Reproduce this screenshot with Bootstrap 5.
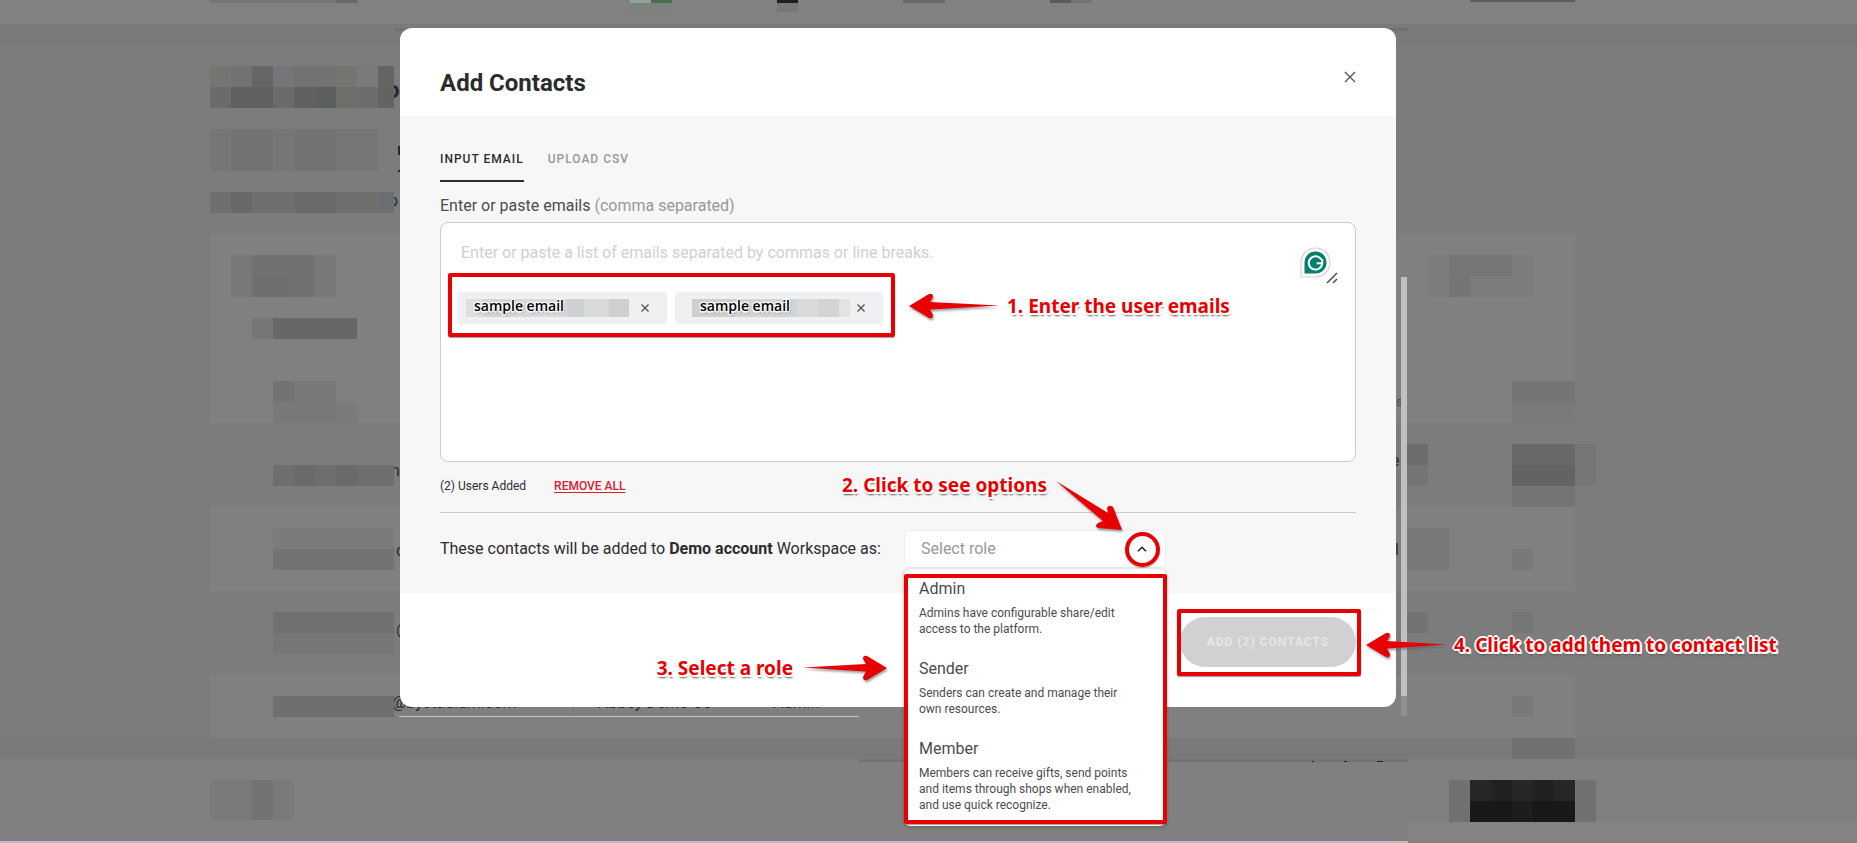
<!DOCTYPE html>
<html lang="en">
<head>
<meta charset="utf-8">
<meta name="viewport" content="width=device-width, initial-scale=1">
<title>Add Contacts</title>
<link href="https://cdn.jsdelivr.net/npm/bootstrap@5.3.0/dist/css/bootstrap.min.css" rel="stylesheet">
<style>
  :root { --mark: #e80000; --ink: #2b2c2e; }
  body { font-family: Roboto, "Noto Sans", sans-serif; font-size: 16px; line-height: 20px; color: var(--ink); background: #7b7b7b; }
  .stage { min-height: 100vh; overflow: hidden; display: grid; grid-template-columns: 400fr 996fr 461fr; align-items: start; }
  .backdrop-art { top: 0; left: 0; width: 100%; height: 100%; }
  .dialog-panel { grid-column: 2; margin-top: 28px; background: #fff; border-radius: 12px; }
  .dialog-head { padding: 39px 40px 17px; }
  .dialog-head h1 { font-size: 24px; line-height: 32px; }
  .icon-btn { border: 0; background: none; padding: 0; line-height: 0; }
  .dialog-main { background: #f7f7f8; padding: 33px 40px 25px; }
  .tab-link { font-size: 12px; font-weight: 500; letter-spacing: 1px; color: #97989a; padding: 0 0 11px; border: 0; border-bottom: 2px solid transparent; background: none; }
  .tab-link.active { color: var(--ink); border-color: var(--ink); }
  .field-label { margin: 14px 0 6px; color: #4b4c4e; }
  .muted { color: #97989a; }
  .email-box { height: 240px; border: 1px solid #cacbcc; border-radius: 8px; background: #fff; }
  .email-input { display: block; width: 100%; height: 69px; border: 0; resize: none; overflow: hidden; background: none; padding: 20px 20px; line-height: 20px; outline: 0; }
  .email-input::placeholder { color: #cfd0d2; opacity: 1; }
  .grammar { right: 24px; top: 24px; }
  .grip { right: 17px; top: 49px; }
  .chips { padding-left: 16px; gap: 8px; width: max-content; }
  .chip { height: 32px; width: 210px; border-radius: 4px; background: #eff0f2; padding: 0 18px 0 9px; }
  .chip-short { width: 208px; padding-left: 17px; }
  .chip-name { width: 163px; height: 18px; padding-left: 8px; font: 600 14px/14px "Open Sans", sans-serif; color: #000;
    background: linear-gradient(90deg, #dedfe1 0 17px, #d3d4d6 17px 51px, #d8d9db 51px 101px, #d0d0d2 101px 118px, #d8d9da 118px 143px, #cfcfd1 143px);
    text-shadow: -1px -1px 1px #fff, 1px -1px 1px #fff, -1px 1px 1px #fff, 1px 1px 1px #fff, 0 2px 1px #fff, 1px 2px 2px #777; }
  .chip-short .chip-name { width: 158px; background: linear-gradient(90deg, #cdced0 0 42px, #d2d3d5 42px 105px, #d9dadc 105px 126px, #d3d4d6 126px 147px, #e2e3e5 147px); }
  .status { font-size: 12px; margin-top: 14px; gap: 28px; }
  .remove-link { color: #d8202f; font-weight: 500; text-underline-offset: 2px; }
  .rule { border-top: 1px solid #cacbcc; margin: 16px 0 17px; }
  .role-row { gap: 8px; }
  .role-text { min-width: 456px; }
  .role-wrap { width: 262px; }
  .role-select { width: 100%; height: 38px; border: 1px solid #eeeeef; border-radius: 7px; background: #fff; padding: 0 16px; color: #97989a; appearance: none; }
  .chevron { right: 19px; top: 16px; pointer-events: none; }
  .role-menu { left: 0; top: 39px; width: 100%; height: 257px; background: #fff; border-radius: 6px; padding: 10px 0 0; box-shadow: 0 1px 4px rgba(0,0,0,.25); z-index: 2; }
  .role-item { display: block; width: 100%; border: 0; background: none; text-align: left; padding: 0 12px 0 15px; margin-bottom: 22px; color: #4b4c4e; }
  .role-item small { display: block; font-size: 12px; line-height: 16px; margin-top: 6px; }
  .dialog-foot { padding: 24px 40px 40px; }
  .add-btn { width: 176px; height: 50px; border: 0; border-radius: 25px; background: #d1d1d3; color: #e6e6e8; font-size: 12px; font-weight: 700; letter-spacing: 1px; white-space: nowrap; }

  /* red call-outs laid over the dialog */
  .ring { border: 4px solid var(--mark); border-radius: 2px; box-shadow: 0 1px 1px rgba(90,90,90,.6); pointer-events: none; z-index: 3; }
  .ring-chips { left: 7px; top: 50px; width: 447px; height: 64px; }
  .ring-menu { left: 0; top: 5px; width: 263px; height: 250px; }
  .ring-chevron { right: 6px; top: 2px; width: 35px; height: 35px; border-radius: 50%; }
  .ring-add { left: -3px; top: -8px; width: 184px; height: 67px; }
  .note { display: flex; align-items: center; gap: 8px; white-space: nowrap; z-index: 3; }
  .note span { font: bold 19px/24px "Noto Sans", sans-serif; color: var(--mark);
    text-shadow: -2px 0 0 #fff, 2px 0 0 #fff, 0 -2px 0 #fff, 0 2px 0 #fff, -1px -1px 0 #fff, 1px -1px 0 #fff, -1px 1px 0 #fff, 1px 1px 0 #fff, 2px 2px 0 #fff, 1px 3px 2px #555; }
  .note svg { filter: drop-shadow(1px 2px 1px rgba(90,90,90,.6)); flex: none; }
  .note-1 { left: 468px; top: 70px; }
  .note-2 { right: 44px; top: -57px; align-items: flex-start; gap: 9px; }
  .note-3 { right: 509px; top: 62px; gap: 10px; }
  .note-4 { left: 186px; top: 15px; }
</style>
</head>
<body>
<div class="stage position-relative">
  <svg class="backdrop-art position-absolute" viewBox="0 0 1857 843" preserveAspectRatio="none" aria-hidden="true" shape-rendering="crispEdges">
    <defs><clipPath id="pageEdge"><rect x="394" y="0" width="1007" height="843"/></clipPath></defs>
    <rect width="1857" height="843" fill="#7c7c7c"/>
    <rect width="1857" height="24" fill="#818181"/>
    <rect y="24" width="1857" height="21" fill="#7a7a7a"/>
    <g fill="#808080">
      <rect x="210" y="234" width="190" height="189"/><rect x="210" y="506" width="190" height="85"/><rect x="210" y="675" width="190" height="63"/>
      <rect x="1396" y="234" width="179" height="189"/><rect x="1396" y="507" width="179" height="84"/><rect x="1396" y="675" width="179" height="63"/>
      <rect x="394" y="700" width="1014" height="38"/><rect y="759" width="1857" height="84"/>
    </g>
    <rect y="738" width="1857" height="21" fill="#7a7a7a"/>
    <rect x="858" y="759" width="550" height="3" fill="#747474"/>
    <rect x="394" y="28" width="1014" height="3" fill="#707070"/>
    <rect x="1408" y="822" width="449" height="21" fill="#838383"/>
    <!-- header strip -->
    <rect x="210" width="148" height="3" fill="#757575"/><rect x="336" width="21" height="3" fill="#696969"/>
    <rect x="630" width="21" height="3" fill="#8fa396"/><rect x="651" width="21" height="3" fill="#47704f"/><rect x="630" y="3" width="42" height="9" fill="#7d817d"/>
    <rect x="777" width="21" height="3" fill="#1e1e1e"/><rect x="777" y="3" width="21" height="9" fill="#777"/>
    <rect x="903" width="42" height="3" fill="#686868"/><rect x="1050" width="21" height="3" fill="#5a5a5a"/><rect x="1071" width="21" height="3" fill="#747474"/>
    <rect x="1470" width="105" height="2" fill="#5c5c5c"/>
    <!-- left mosaic -->
    <rect x="210" y="66" width="21" height="21" fill="#757572"/><rect x="231" y="66" width="21" height="21" fill="#707372"/><rect x="252" y="66" width="21" height="21" fill="#666"/><rect x="273" y="66" width="21" height="21" fill="#75767a"/><rect x="294" y="66" width="42" height="21" fill="#727272"/><rect x="336" y="66" width="21" height="21" fill="#757471"/><rect x="357" y="66" width="21" height="21" fill="#7a7a7b"/><rect x="378" y="66" width="16" height="21" fill="#646464"/>
    <rect x="210" y="87" width="21" height="21" fill="#6b6b6b"/><rect x="231" y="87" width="42" height="21" fill="#606060"/><rect x="273" y="87" width="21" height="21" fill="#6b6b6b"/><rect x="294" y="87" width="21" height="21" fill="#616161"/><rect x="315" y="87" width="21" height="21" fill="#5c605f"/><rect x="336" y="87" width="21" height="21" fill="#6f6e6a"/><rect x="357" y="87" width="21" height="21" fill="#6c6d70"/><rect x="378" y="87" width="16" height="21" fill="#636363"/>
    <rect x="210" y="129" width="168" height="42" fill="#767676"/><rect x="231" y="129" width="42" height="42" fill="#737373"/><rect x="294" y="129" width="42" height="42" fill="#727473"/>
    <rect x="210" y="192" width="184" height="21" fill="#6f6f6f"/><rect x="231" y="192" width="21" height="21" fill="#686868"/><rect x="294" y="192" width="42" height="21" fill="#6b6b6b"/><rect x="378" y="192" width="16" height="21" fill="#6b6e72"/>
    <rect x="231" y="255" width="105" height="42" fill="#787878"/><rect x="252" y="255" width="63" height="42" fill="#717171"/><rect x="252" y="276" width="42" height="21" fill="#6f6f6f"/>
    <rect x="252" y="318" width="21" height="21" fill="#767676"/><rect x="273" y="318" width="84" height="21" fill="#676767"/>
    <rect x="273" y="381" width="63" height="42" fill="#797979"/><rect x="273" y="381" width="21" height="21" fill="#737373"/><rect x="336" y="402" width="21" height="21" fill="#797c7b"/>
    <rect x="273" y="465" width="121" height="21" fill="#6e6e6e"/><rect x="294" y="465" width="21" height="21" fill="#6a6a6a"/><rect x="336" y="465" width="21" height="21" fill="#6a6a6a"/>
    <rect x="273" y="528" width="121" height="21" fill="#7b7b7b"/><rect x="273" y="549" width="121" height="21" fill="#737373"/>
    <rect x="273" y="612" width="121" height="21" fill="#6f7070"/><rect x="273" y="633" width="121" height="21" fill="#767676"/>
    <rect x="273" y="696" width="121" height="21" fill="#6e6f6f"/>
    <rect x="210" y="780" width="84" height="40" fill="#7a7a7a"/><rect x="252" y="780" width="21" height="40" fill="#737373"/>
    <!-- right mosaic -->
    <rect x="1428" y="255" width="105" height="42" fill="#7c7c7c"/><rect x="1449" y="255" width="63" height="21" fill="#767676"/><rect x="1449" y="276" width="21" height="21" fill="#757575"/>
    <rect x="1512" y="381" width="63" height="21" fill="#747574"/><rect x="1512" y="402" width="63" height="21" fill="#7a7a7a"/>
    <rect x="1407" y="444" width="21" height="21" fill="#6c6c6c"/><rect x="1407" y="465" width="21" height="21" fill="#757575"/>
    <rect x="1512" y="444" width="63" height="21" fill="#686a6a"/><rect x="1512" y="465" width="63" height="21" fill="#626365"/><rect x="1512" y="486" width="63" height="21" fill="#747474"/><rect x="1575" y="444" width="21" height="42" fill="#767676"/>
    <rect x="1407" y="528" width="42" height="42" fill="#797979"/><rect x="1512" y="549" width="21" height="21" fill="#797979"/>
    <rect x="1407" y="612" width="21" height="21" fill="#737373"/><rect x="1512" y="612" width="21" height="21" fill="#767676"/><rect x="1512" y="696" width="21" height="21" fill="#797979"/>
    <rect x="1512" y="738" width="63" height="21" fill="#717171"/>
    <rect x="1449" y="780" width="147" height="42" fill="#717171"/>
    <rect x="1470" y="780" width="105" height="21" fill="#262626"/><rect x="1491" y="780" width="21" height="21" fill="#212121"/><rect x="1533" y="780" width="21" height="21" fill="#212121"/>
    <rect x="1470" y="801" width="105" height="21" fill="#181818"/><rect x="1512" y="801" width="21" height="21" fill="#1d1d1d"/>
    <!-- page edges showing round the dialog -->
    <rect x="1401" y="277" width="6" height="419" fill="#c0c0c0"/><rect x="1401" y="696" width="6" height="20" fill="#919191"/>
    <rect x="399" y="716" width="460" height="1" fill="#c4c4c4"/><rect x="573" y="707" width="1" height="9" fill="#727272"/>
    <rect y="841" width="1408" height="2" fill="#bdb8c6"/>
    <g fill="#262a30" font-family="Roboto, sans-serif" font-size="16" clip-path="url(#pageEdge)">
      <text x="386" y="98" font-size="24" font-weight="700">o</text><text x="389" y="206">p</text>
      <text x="391" y="476">n</text><text x="396" y="556">o</text><text x="396" y="635">@</text>
      <text x="392" y="708">@bystadium.com</text><text x="598" y="708">Abbey Demo Co</text><text x="773" y="708">Admin</text>
      <text x="1396" y="406" font-size="13" fill="#4a4a4a">s</text><text x="1391" y="466">e</text><text x="1395" y="555">l</text>
    </g>
    <rect x="398" y="146" width="2" height="9" fill="#262a30"/><rect x="398" y="170" width="2" height="2" fill="#262a30"/>
    <rect x="1312" y="761" width="2" height="1" fill="#222"/><rect x="1344" y="761" width="3" height="1" fill="#222"/><rect x="1377" y="761" width="6" height="1" fill="#222"/>
  </svg>

  <main class="dialog-panel position-relative" role="dialog" aria-labelledby="dlgTitle">
    <header class="dialog-head d-flex justify-content-between align-items-start">
      <h1 id="dlgTitle" class="fw-bold mb-0">Add Contacts</h1>
      <button class="icon-btn mt-1" type="button" aria-label="Close">
        <svg width="12" height="12" viewBox="0 0 12 12" fill="none" stroke="#4b4c4e" stroke-width="1.2"><path d="M1 1l10 10M11 1L1 11"/></svg>
      </button>
    </header>

    <section class="dialog-main">
      <div class="d-flex gap-4" role="tablist">
        <button class="tab-link active" role="tab" aria-selected="true" type="button">INPUT EMAIL</button>
        <button class="tab-link" role="tab" aria-selected="false" type="button">UPLOAD CSV</button>
      </div>

      <label class="field-label d-block" for="emails">Enter or paste emails <span class="muted">(comma separated)</span></label>
      <div class="email-box position-relative">
        <textarea id="emails" class="email-input" placeholder="Enter or paste a list of emails separated by commas or line breaks."></textarea>
        <svg class="grammar position-absolute" width="31" height="31" viewBox="0 0 31 31">
          <path d="M1 30V15.500A14.500 14.500 0 1 1 15.500 30Z" fill="#fff" stroke="#d3d1e0" stroke-width="1.200"/>
          <path d="M4.500 26.500V15.500A11 11 0 1 1 15.500 26.500Z" fill="#027e6f"/>
          <path d="M21.300 12.500A6.700 6.700 0 1 0 22.200 16.200H16.600M22.300 12V16.200" fill="none" stroke="#fff" stroke-width="2"/>
        </svg>
        <svg class="grip position-absolute" width="12" height="12" viewBox="0 0 12 12" stroke="#4b4c4e" stroke-width="1.500"><path d="M1 11L11 1M7 11l4-4"/></svg>

        <div class="chips d-flex">
          <div class="chip d-flex align-items-center justify-content-between">
            <span class="chip-name">sample email</span>
            <button class="icon-btn" type="button" aria-label="Remove first email"><svg width="8" height="8" viewBox="0 0 8 8" stroke="#4b4c4e" stroke-width="1.200"><path d="M.5 .5l7 7M7.500 .5l-7 7"/></svg></button>
          </div>
          <div class="chip chip-short d-flex align-items-center justify-content-between">
            <span class="chip-name">sample email</span>
            <button class="icon-btn" type="button" aria-label="Remove second email"><svg width="8" height="8" viewBox="0 0 8 8" stroke="#4b4c4e" stroke-width="1.200"><path d="M.5 .5l7 7M7.500 .5l-7 7"/></svg></button>
          </div>
        </div>
        <div class="ring ring-chips position-absolute"></div>
        <div class="note note-1 position-absolute">
          <svg width="90" height="26" viewBox="0 0 90 26"><path d="M0 13L20 1Q24 0 24 4L21 9L90 12.500L21 16.500L24 22Q24 26 20 25Z" fill="var(--mark)"/></svg>
          <span>1. Enter the user emails</span>
        </div>
      </div>

      <div class="status d-flex">
        <span>(2) Users Added</span>
        <a class="remove-link" href="#">REMOVE ALL</a>
      </div>
      <div class="rule"></div>

      <div class="role-row d-flex align-items-center position-relative">
        <label class="role-text" for="role">These contacts will be added to <strong>Demo account</strong> Workspace as:</label>
        <div class="role-wrap position-relative">
          <select id="role" class="role-select"><option>Select role</option></select>
          <svg class="chevron position-absolute" width="10" height="6" viewBox="0 0 10 6" fill="none" stroke="#222" stroke-width="1.600"><path d="M1 5.300L5 1.300L9 5.300"/></svg>
          <div class="ring ring-chevron position-absolute"></div>
          <div class="role-menu position-absolute">
            <button class="role-item" type="button">Admin<small>Admins have configurable share/edit<br>access to the platform.</small></button>
            <button class="role-item" type="button">Sender<small>Senders can create and manage their<br>own resources.</small></button>
            <button class="role-item" type="button">Member<small>Members can receive gifts, send points<br>and items through shops when enabled,<br>and use quick recognize.</small></button>
            <div class="ring ring-menu position-absolute"></div>
          </div>
          <div class="note note-2 position-absolute">
            <span>2. Click to see options</span>
            <svg width="66" height="50" viewBox="0 0 66 50" class="mt-2"><path d="M0 0L52 32L51 27Q53 23 57 26L66 49L42 47Q38 45 42 42L47 40Z" fill="var(--mark)"/></svg>
          </div>
        </div>
      </div>
    </section>

    <footer class="dialog-foot d-flex justify-content-end position-relative">
      <div class="note note-3 position-absolute">
        <span>3. Select a role</span>
        <svg width="84" height="26" viewBox="0 0 84 26"><path d="M84 13L64 1Q60 0 60 4L63 9L0 12.500L63 16.500L60 22Q60 26 64 25Z" fill="var(--mark)"/></svg>
      </div>
      <div class="position-relative">
        <button class="add-btn" type="button" disabled>ADD (2) CONTACTS</button>
        <div class="ring ring-add position-absolute"></div>
        <div class="note note-4 position-absolute">
          <svg width="80" height="26" viewBox="0 0 80 26"><path d="M0 13L20 1Q24 0 24 4L21 9L80 12.500L21 16.500L24 22Q24 26 20 25Z" fill="var(--mark)"/></svg>
          <span>4. Click to add them to contact list</span>
        </div>
      </div>
    </footer>
  </main>
</div>
<script src="https://cdn.jsdelivr.net/npm/bootstrap@5.3.0/dist/js/bootstrap.bundle.min.js"></script>
</body>
</html>
